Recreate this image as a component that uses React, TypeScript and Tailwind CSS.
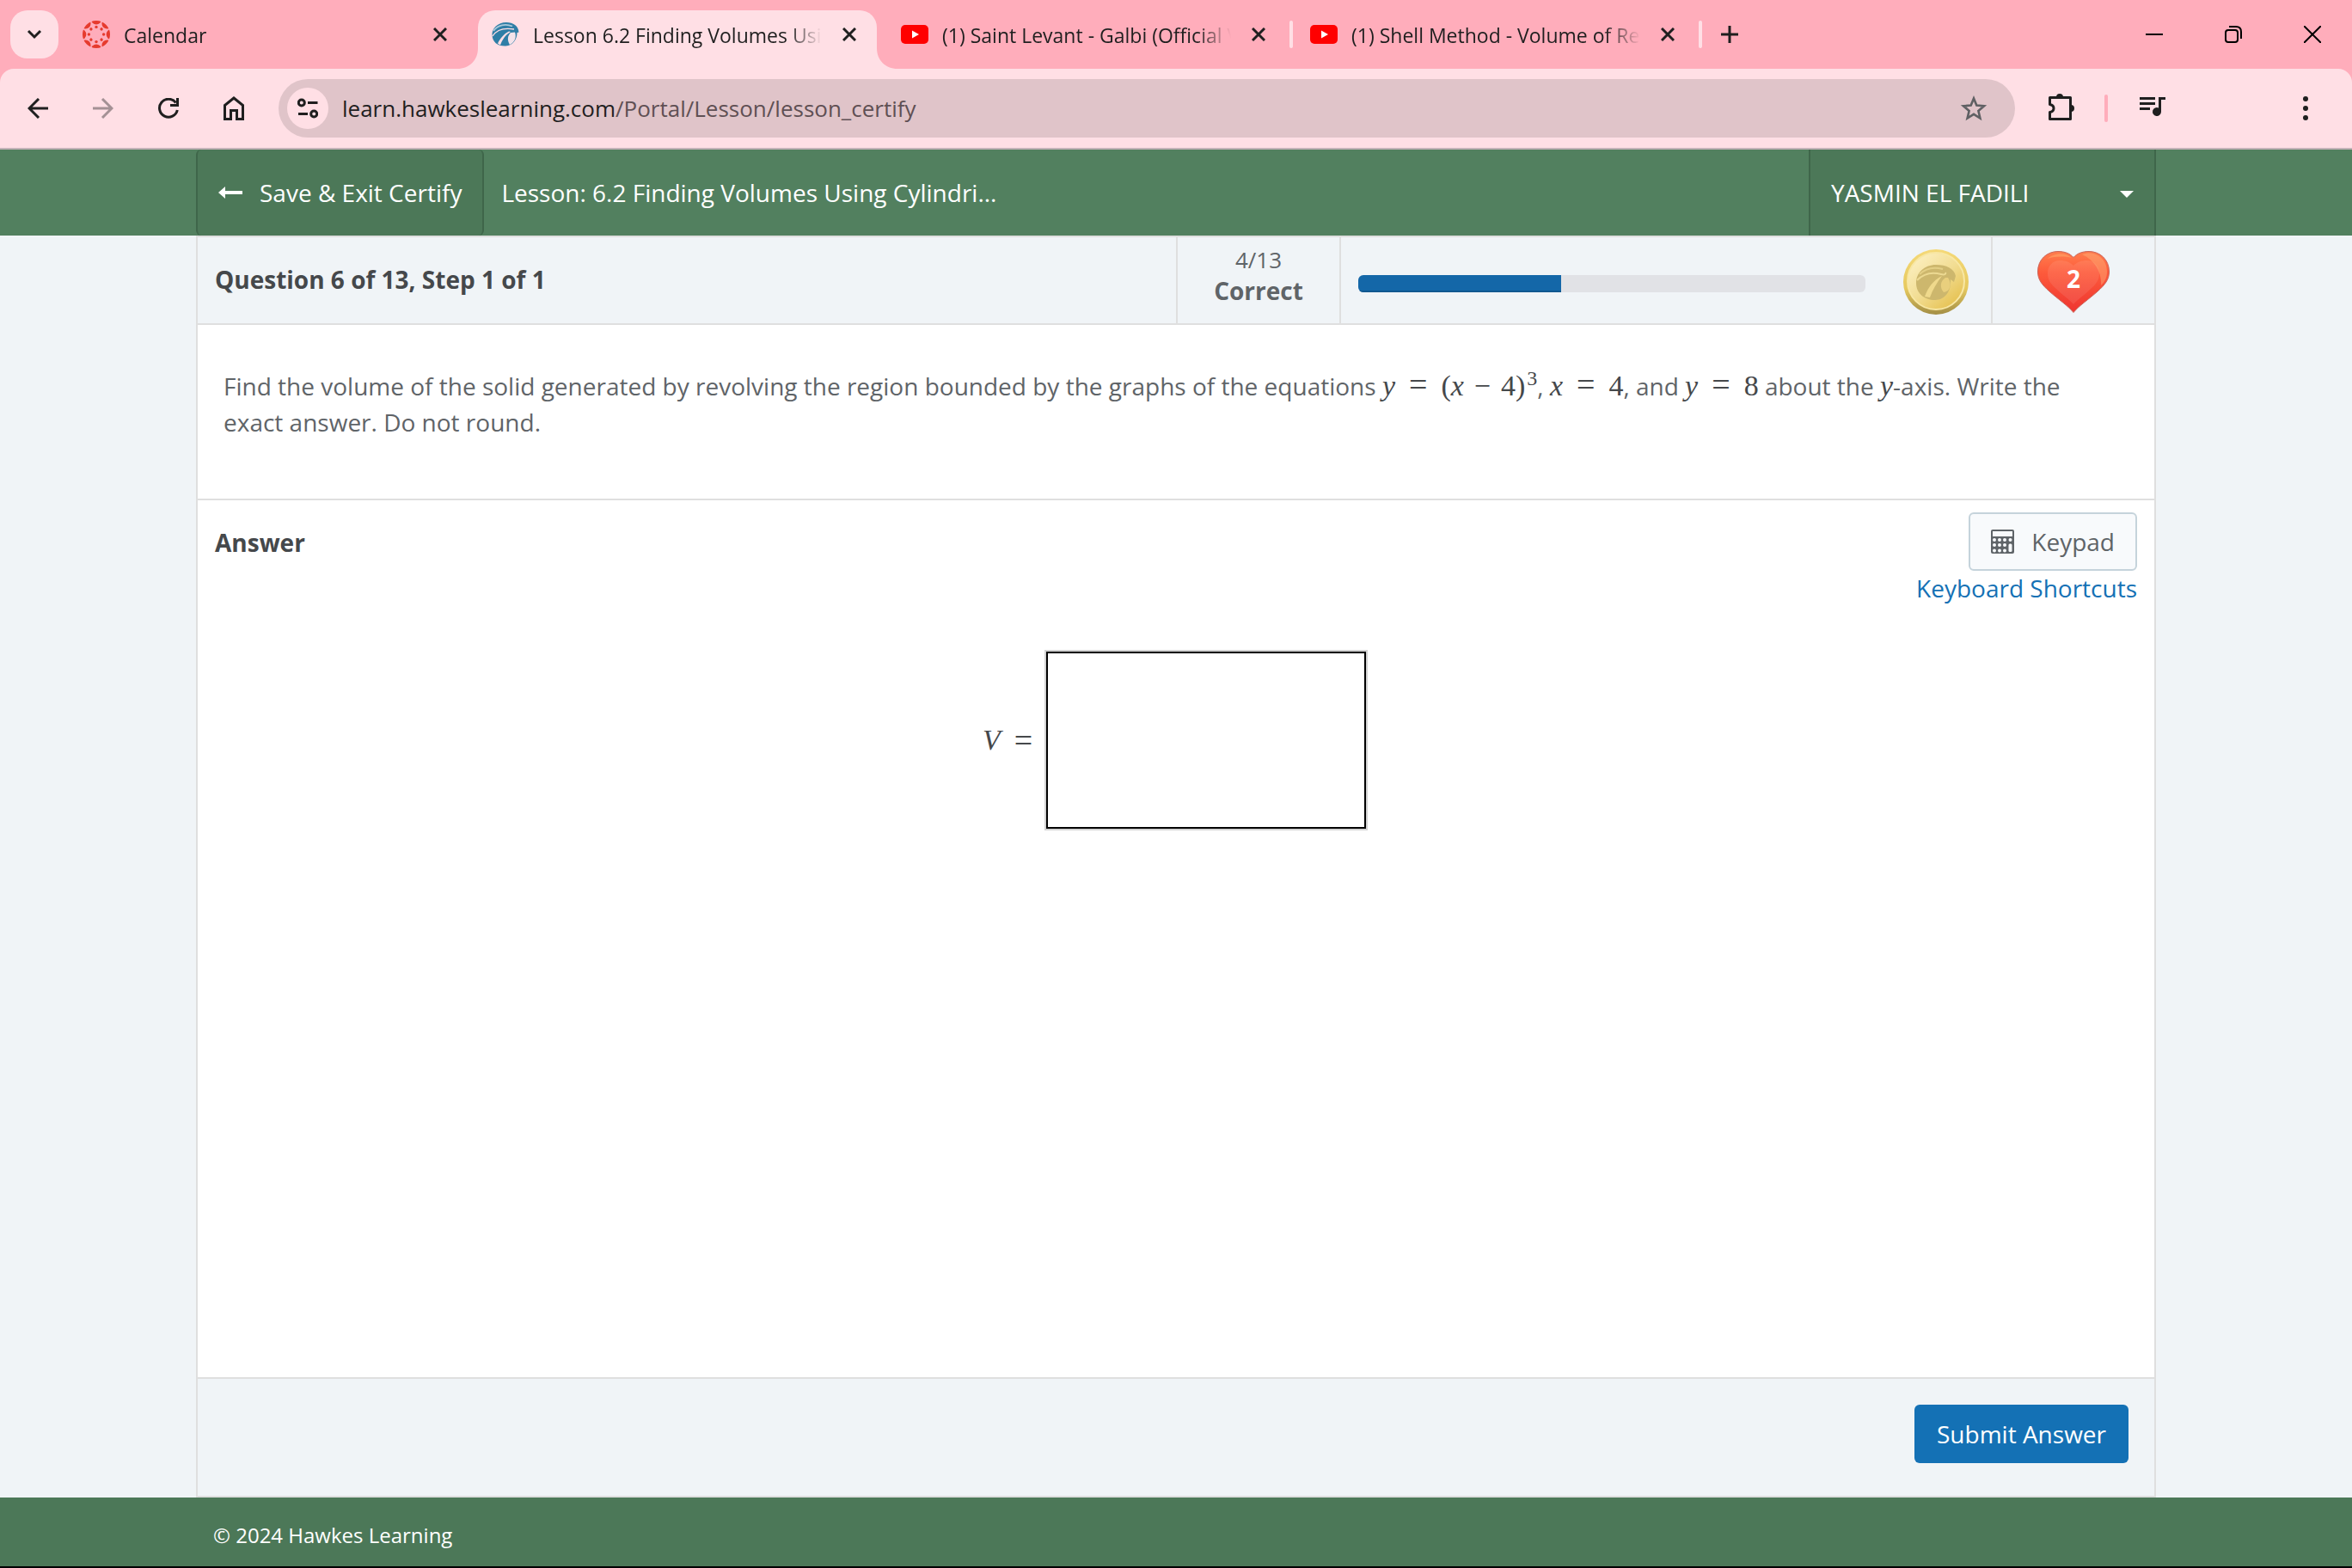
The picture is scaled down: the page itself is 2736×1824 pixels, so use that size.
import React, { useState } from 'react'
import clsx from 'clsx'

interface TabInfo {
  title: string
  icon: React.ReactNode
  active?: boolean
}

const SPOKES = [0, 45, 90, 135, 180, 225, 270, 315]

function CanvasLogo() {
  return (
    <svg viewBox="0 0 32 32" className="h-8 w-8 shrink-0" fill="#e63b2e">
      <clipPath id="canvas-disc">
        <circle cx="16" cy="16" r="16" />
      </clipPath>
      {SPOKES.map((angle) => (
        <g key={angle} transform={`rotate(${angle} 16 16)`}>
          <circle cx="16" cy="-1.600" r="6" clipPath="url(#canvas-disc)" />
          <circle cx="16" cy="7.400" r="1.700" />
        </g>
      ))}
    </svg>
  )
}

function HawkLogo() {
  return (
    <svg viewBox="0 0 32 32" className="h-8 w-8 shrink-0">
      <path
        d="M.5 17C0 9 7 2 17 2c8 0 14 4 14.500 11.500l-2 .5c0 8-5 15-13 15.500C7 30 1 25 .5 17z"
        fill="#2f7ea6"
      />
      <path d="M2 12C7 5 16 3 24 6.500" stroke="#a9c9da" strokeWidth="1.800" fill="none" />
      <path d="M1 18C6 10 14 8 26 10" stroke="#ffdfe5" strokeWidth="1.300" fill="none" />
      <path d="M20 12.500c-6 3-10 8-13 14l3 2c2-6 6-12 12-15.500z" fill="#ffdfe5" />
      <path d="M22 14c-4 4-4 9-1 14 6-3 8-9 6-14.500z" fill="#f3e3ea" />
    </svg>
  )
}

function YouTubeLogo() {
  return (
    <svg viewBox="0 0 32 32" className="h-8 w-8 shrink-0">
      <rect x="0" y="5" width="32" height="22" rx="5" fill="#ff0000" />
      <path d="M13 11.500v9l8-4.500z" fill="#fff" />
    </svg>
  )
}

function Coin() {
  return (
    <svg viewBox="0 0 76 76" className="h-19 w-19 shrink-0">
      <defs>
        <linearGradient id="coin-rim" x1="0" y1="0" x2="0" y2="1">
          <stop offset="0" stopColor="#f5d978" />
          <stop offset="0.6" stopColor="#e6c95f" />
          <stop offset="1" stopColor="#a38e45" />
        </linearGradient>
        <linearGradient id="coin-face" x1="0.15" y1="0.1" x2="0.85" y2="0.9">
          <stop offset="0" stopColor="#fbeebd" />
          <stop offset="0.5" stopColor="#f2dd93" />
          <stop offset="1" stopColor="#e6c252" />
        </linearGradient>
      </defs>
      <circle cx="38" cy="38" r="38" fill="url(#coin-rim)" />
      <circle cx="38" cy="37" r="33" fill="url(#coin-face)" stroke="#f8e7a4" strokeWidth="2" />
      <path
        d="M15 39c0-12 10-21 23-21 12 0 21 4 23 13l-2 7-4-3c1 13-6 24-18 24-13 0-22-8-22-20z"
        fill="#cdb76d"
      />
      <path d="M19 29c7-7 16-9 27-6" stroke="#e3cf86" strokeWidth="2" fill="none" />
      <path d="M16 36c8-8 17-10 28-7 4 1 6 0 5-2" stroke="#ecd992" strokeWidth="2" fill="none" />
      <path d="M45 31c-10 5-16 13-20 24l6 1c3-9 8-17 14-25z" fill="#efd98c" />
      <path d="M49 33c-6 4-7 11-2 17 8-1 10-10 5-17z" fill="#e9cf7d" />
    </svg>
  )
}

function Heart() {
  return (
    <svg viewBox="0 0 84 72" className="h-18 w-21">
      <defs>
        <linearGradient id="heart-fill" x1="0" y1="0" x2="0" y2="1">
          <stop offset="0" stopColor="#ff7d4d" />
          <stop offset="0.35" stopColor="#fd5a3b" />
          <stop offset="1" stopColor="#ee3430" />
        </linearGradient>
      </defs>
      <path
        d="M42 71.500C36 64 24 56 14 47 5 39 .5 33 .5 24 .5 10 11 .5 24 .5c8 0 14 2.500 18 7 4-4.500 10-7 18-7C73 .5 83.500 10 83.500 24c0 9-4.500 15-13.500 23-10 9-22 17-28 24.500z"
        fill="url(#heart-fill)"
        stroke="#c9655a"
        strokeWidth="1"
      />
      <path
        d="M42 62C37 56 29 51 22 44c-7-6-10-11-10-18 0-9 6-15 14-15 7 0 12 2 16 6 4-4 9-6 16-6 8 0 14 6 14 15 0 7-3 12-10 18-7 7-15 12-20 18z"
        fill="#fff"
        opacity="0.09"
      />
      <path d="M52 4c12-5 29 2 29 20 0 8-3 12-7 16 1-14-6-29-22-36z" fill="#ffb27a" opacity="0.45" />
      <path d="M12 9C17 3 32 0 40 8c-8-2-20-2-28 1z" fill="#ffa568" opacity="0.6" />
    </svg>
  )
}

function CalculatorIcon() {
  return (
    <svg viewBox="0 0 27 28" className="h-7 w-[27px]">
      <rect width="27" height="28" rx="2" fill="#5f6468" />
      <rect x="2" y="2" width="23" height="6" fill="#f8fafc" />
      {[12, 18, 24.5].map((cy) =>
        [4, 10, 16, 22.5].map((cx) =>
          cx > 20 && cy > 13 ? null : <circle key={`${cx}-${cy}`} cx={cx} cy={cy} r="2" fill="#f8fafc" />
        )
      )}
      <rect x="20.500" y="16.500" width="4" height="9.500" rx="1.500" fill="#f8fafc" />
    </svg>
  )
}

function CloseIcon() {
  return (
    <svg viewBox="0 0 16 16" className="h-4 w-4" stroke="#1f1f1f" strokeWidth="3">
      <path d="M1 1l14 14M15 1L1 15" />
    </svg>
  )
}

function Tab({ tab }: { tab: TabInfo }) {
  return (
    <div
      className={clsx(
        'relative flex h-17 w-116 shrink-0 items-center pl-4 pr-4',
        tab.active && 'rounded-t-[20px] bg-[#ffdfe5]'
      )}
    >
      {tab.active && (
        <>
          <svg viewBox="0 0 24 24" className="absolute bottom-0 -left-6 h-6 w-6" fill="#ffdfe5">
            <path d="M24 0v24H0C14 24 24 14 24 0z" />
          </svg>
          <svg viewBox="0 0 24 24" className="absolute bottom-0 -right-6 h-6 w-6" fill="#ffdfe5">
            <path d="M0 0v24h24C10 24 0 14 0 0z" />
          </svg>
        </>
      )}
      <span className="-mt-3 flex w-full items-center">
        {tab.icon}
        <span className="ml-4 w-[336px] overflow-hidden whitespace-nowrap pt-[2px] text-[23px] leading-8 text-[#1f1f1f] [mask-image:linear-gradient(to_right,black_88%,transparent)]">
          {tab.title}
        </span>
        <button aria-label="Close tab" className="ml-6 flex h-8 w-4 items-center justify-center">
          <CloseIcon />
        </button>
      </span>
    </div>
  )
}

const tabs: TabInfo[] = [
  { title: 'Calendar', icon: <CanvasLogo /> },
  { title: 'Lesson 6.2 Finding Volumes Using', icon: <HawkLogo />, active: true },
  { title: '(1) Saint Levant - Galbi (Official Video)', icon: <YouTubeLogo /> },
  { title: '(1) Shell Method - Volume of Revolution', icon: <YouTubeLogo /> },
]

function TabStrip() {
  return (
    <div className="flex h-20 items-end bg-[#ffadbb]">
      <button
        aria-label="Search tabs"
        className="mb-3 ml-3 mr-3 flex h-14 w-14 shrink-0 items-center justify-center rounded-[20px] bg-[#ffdfe5]"
      >
        <svg viewBox="0 0 18 12" className="h-3 w-[18px]" fill="none" stroke="#1f1f1f" strokeWidth="3">
          <path d="M2 2l7 7 7-7" />
        </svg>
      </button>
      {tabs.map((tab, i) => (
        <React.Fragment key={tab.title}>
          <Tab tab={tab} />
          <span className="mb-6 flex h-8 w-3 shrink-0 justify-center">
            {i > 1 && <span className="w-1 rounded-full bg-[#ffdfe5]" />}
          </span>
        </React.Fragment>
      ))}
      <button aria-label="New tab" className="mb-3 flex h-14 w-14 items-center justify-center">
        <svg viewBox="0 0 20 20" className="h-5 w-5" stroke="#1f1f1f" strokeWidth="3">
          <path d="M10 0v20M0 10h20" />
        </svg>
      </button>
      <div className="ml-auto flex h-20 items-center">
        <button aria-label="Minimize" className="flex h-20 w-[92px] items-center justify-center">
          <svg viewBox="0 0 20 20" className="h-5 w-5" stroke="#000" strokeWidth="2">
            <path d="M0 10h20" />
          </svg>
        </button>
        <button aria-label="Restore" className="flex h-20 w-[92px] items-center justify-center">
          <svg viewBox="0 0 20 20" className="h-5 w-5" fill="none" stroke="#000" strokeWidth="2">
            <rect x="1" y="5" width="14" height="14" rx="3" />
            <path d="M5 1h8c4 0 6 2 6 6v8" />
          </svg>
        </button>
        <button aria-label="Close window" className="flex h-20 w-[92px] items-center justify-center">
          <svg viewBox="0 0 20 20" className="h-5 w-5" stroke="#000" strokeWidth="2">
            <path d="M0 0l20 20M20 0L0 20" />
          </svg>
        </button>
      </div>
    </div>
  )
}

function ToolbarButton({ label, faded, children }: { label: string; faded?: boolean; children: React.ReactNode }) {
  return (
    <button
      aria-label={label}
      className={clsx('flex h-17 w-[76px] shrink-0 items-center justify-center text-[#1f1f1f]', faded && 'opacity-40')}
    >
      {children}
    </button>
  )
}

function Toolbar() {
  return (
    <div className="bg-[#ffadbb]">
      <div className="flex h-[94px] items-start rounded-t-2xl border-b-2 border-[#c4b3b8] bg-[#ffdfe5] pl-[6px] pt-3">
        <ToolbarButton label="Back">
          <svg viewBox="0 0 24 24" className="h-6 w-6" fill="none" stroke="currentColor" strokeWidth="3">
            <path d="M24 12H2M13 1L2 12l11 11" />
          </svg>
        </ToolbarButton>
        <ToolbarButton label="Forward" faded>
          <svg viewBox="0 0 24 24" className="h-6 w-6" fill="none" stroke="currentColor" strokeWidth="3">
            <path d="M0 12h22M11 1l11 11-11 11" />
          </svg>
        </ToolbarButton>
        <ToolbarButton label="Reload">
          <svg viewBox="0 0 24 24" className="h-6 w-6" fill="none" stroke="currentColor" strokeWidth="3">
            <path d="M22.300 14A10.500 10.500 0 1 1 20.500 5.500" />
            <path d="M22.500 0v8.500H14" />
          </svg>
        </ToolbarButton>
        <ToolbarButton label="Home">
          <svg viewBox="0 0 24 28" className="h-7 w-6" fill="none" stroke="currentColor" strokeWidth="3">
            <path d="M1.500 26.500V10.500L12 2l10.500 8.500v16h-7V16.500h-7v10z" />
          </svg>
        </ToolbarButton>
        <div className="ml-[14px] flex h-17 min-w-0 flex-1 items-center rounded-full bg-[#e0c4c9] pl-[10px] pr-8">
          <button
            aria-label="View site information"
            className="flex h-12 w-12 shrink-0 items-center justify-center rounded-full bg-[#ffdfe5]"
          >
            <svg viewBox="0 0 24 24" className="h-6 w-6" fill="none" stroke="#1f1f1f" strokeWidth="3">
              <circle cx="4.800" cy="5.500" r="3.500" />
              <path d="M12 5.500h11.500M1 18.500h11" />
              <circle cx="19.200" cy="18.500" r="3.500" />
            </svg>
          </button>
          <span className="ml-4 flex-1 text-[26px] leading-9 text-[#1f1f1f]">
            learn.hawkeslearning.com<span className="text-[#5f5054]">/Portal/Lesson/lesson_certify</span>
          </span>
          <button aria-label="Bookmark this tab" className="flex h-8 w-8 items-center justify-center">
            <svg viewBox="0 0 32 30" className="h-[30px] w-8" fill="none" stroke="#5f6063" strokeWidth="2.600">
              <path d="M16 3.500l3.300 8.100 8.700.7-6.600 5.700 2 8.500-7.400-4.600-7.400 4.600 2-8.500L4 12.300l8.700-.7z" />
            </svg>
          </button>
        </div>
        <div className="flex h-17 shrink-0 items-center pr-[38px]">
          <button aria-label="Extensions" className="ml-9 flex h-9 w-9 items-center justify-center">
            <svg viewBox="0 0 32 32" className="-mt-1 h-8 w-8" fill="none" stroke="#1f1f1f" strokeWidth="3">
              <path d="M2.500 5.500h24v25h-24v-8c6-1 6-8 0-9z" strokeLinejoin="round" />
              <path d="M10 5a4 4 0 0 1 8 0zM27 14a4 4 0 0 1 0 8z" fill="#1f1f1f" stroke="none" />
            </svg>
          </button>
          <span className="ml-8 h-8 w-1 rounded-full bg-[#ffadbb]" />
          <button aria-label="Media controls" className="ml-9 flex h-8 w-8 items-center justify-center">
            <svg viewBox="0 0 30 30" className="h-[30px] w-[30px]" fill="#1f1f1f">
              <path d="M0 2h18v3H0zM0 8h18v3H0zM0 14h12v3H0zM22 2h8v3h-5v14a5 5 0 1 1-3-4.600z" />
            </svg>
          </button>
          <button aria-label="Customize and control" className="ml-[146px] flex h-8 w-8 items-center justify-center">
            <svg viewBox="0 0 8 28" className="h-7 w-2" fill="#1f1f1f">
              <circle cx="4" cy="3" r="3" />
              <circle cx="4" cy="14" r="3" />
              <circle cx="4" cy="25" r="3" />
            </svg>
          </button>
        </div>
      </div>
    </div>
  )
}

function LessonHeader() {
  return (
    <header className="bg-[#52805f] text-[28px] text-white">
      <div className="mx-auto flex h-25 max-w-[2280px] items-stretch">
        <a
          href="#exit"
          className="flex items-center gap-5 rounded-md border-x-2 border-[#3f664a] bg-[#4c7858] pl-6 pr-6"
        >
          <svg viewBox="0 0 28 14" className="h-[14px] w-7" fill="#fff">
            <path d="M0 7l8-7v5h20v4H8v5z" />
          </svg>
          <span>Save &amp; Exit Certify</span>
        </a>
        <h1 className="flex items-center pl-5">Lesson: 6.2 Finding Volumes Using Cylindri...</h1>
        <button className="ml-auto flex w-[404px] items-center justify-between border-x-2 border-[#3f664a] bg-[#4c7858] pl-6 pr-6">
          <span>YASMIN EL FADILI</span>
          <svg viewBox="0 0 16 8" className="mt-1 h-2 w-4" fill="#fff">
            <path d="M0 0h16L8 8z" />
          </svg>
        </button>
      </div>
    </header>
  )
}

function StatusBar({ correct, total, lives }: { correct: number; total: number; lives: number }) {
  return (
    <div className="flex h-[104px] items-stretch border-y-2 border-[#dfdfdf] bg-[#f0f4f7]">
      <h2 className="flex flex-1 items-center pb-[2px] pl-5 text-[28px] font-bold text-[#45484b]">
        Question 6 of 13, Step 1 of 1
      </h2>
      <div className="flex w-[192px] flex-col items-center border-x-2 border-[#dfdfdf] pt-2 text-[#5f6468]">
        <span className="text-[26px] leading-9">
          {correct}/{total}
        </span>
        <span className="text-[28px] font-bold leading-9">Correct</span>
      </div>
      <div className="flex w-[756px] items-center pl-5 pr-[26px] pt-1">
        <div className="mt-1 h-5 flex-1 overflow-hidden rounded-md bg-[#e1e2e6]">
          <div className="h-full w-2/5 border-b-2 border-[#11588f] bg-[#1467a8]" />
        </div>
        <span className="ml-11">
          <Coin />
        </span>
      </div>
      <div className="relative flex w-[190px] items-center justify-center border-l-2 border-[#dfdfdf] pt-1">
        <Heart />
        <span className="absolute pb-2 text-[28px] font-bold text-white">{lives}</span>
      </div>
    </div>
  )
}

function Var({ children }: { children: React.ReactNode }) {
  return <i className="font-['Liberation_Serif',serif] text-[34px] leading-none text-[#45484b]">{children}</i>
}

function Num({ children }: { children: React.ReactNode }) {
  return <span className="font-['Liberation_Serif',serif] text-[34px] leading-none text-[#45484b]">{children}</span>
}

function Op({ children }: { children: React.ReactNode }) {
  return <span className="mx-4 font-['Liberation_Serif',serif] text-[38px] leading-none text-[#45484b]">{children}</span>
}

function QuestionText() {
  return (
    <section className="h-[204px] border-b-2 border-[#dfdfdf] bg-white pl-[30px] pr-14 pt-[50px]">
      <p className="text-[28px] leading-[42px] text-[#5f6468]">
        Find the volume of the solid generated by revolving the region bounded by the graphs of the equations{' '}
        <span className="whitespace-nowrap">
          <Var>y</Var>
          <Op>=</Op>
          <Num>(</Num>
          <Var>x</Var>
          <span className="mx-3">
            <Num>−</Num>
          </span>
          <Num>4)</Num>
          <sup className="ml-[2px] font-['Liberation_Serif',serif] text-[24px] leading-none text-[#45484b]">3</sup>
        </span>
        ,{' '}
        <span className="whitespace-nowrap">
          <Var>x</Var>
          <Op>=</Op>
          <Num>4</Num>
        </span>
        , and{' '}
        <span className="whitespace-nowrap">
          <Var>y</Var>
          <Op>=</Op>
          <Num>8</Num>
        </span>{' '}
        about the <Var>y</Var>-axis. Write the exact answer. Do not round.
      </p>
    </section>
  )
}

function AnswerPanel() {
  const [answer, setAnswer] = useState('')

  return (
    <section className="flex flex-1 flex-col bg-white">
      <div className="flex items-start justify-between pl-5 pr-5 pt-[14px]">
        <h2 className="text-[28px] font-bold leading-[70px] text-[#45484b]">Answer</h2>
        <div className="flex flex-col items-end">
          <button className="flex h-17 items-center gap-5 rounded-md border-2 border-[#c5d3db] bg-[#f8fafc] pl-6 pr-6 text-[28px] text-[#5f6468]">
            <CalculatorIcon />
            <span>Keypad</span>
          </button>
          <a href="#shortcuts" className="text-[28px] leading-10 text-[#1471b5]">
            Keyboard Shortcuts
          </a>
        </div>
      </div>
      <div className="mt-[54px] flex items-center justify-center pr-1">
        <label htmlFor="answer" className="flex items-center text-[#45484b]">
          <Var>V</Var>
          <Op>=</Op>
        </label>
        <input
          id="answer"
          value={answer}
          onChange={(e) => setAnswer(e.target.value)}
          className="h-[206px] w-[372px] border-2 border-black px-4 text-[34px] outline-2 outline-[#d3d3d3]"
        />
      </div>
    </section>
  )
}

export default function App() {
  return (
    <div className="flex min-h-screen flex-col border-b-2 border-black bg-[#f0f4f7] font-['Open_Sans',sans-serif]">
      <TabStrip />
      <Toolbar />
      <LessonHeader />
      <main className="mx-auto flex w-full max-w-[2280px] flex-1 flex-col border-x-2 border-[#dfdfdf]">
        <StatusBar correct={4} total={13} lives={2} />
        <QuestionText />
        <AnswerPanel />
        <div className="flex h-35 items-start justify-end border-y-2 border-[#dfdfdf] bg-[#f0f4f7] pr-[30px] pt-[30px]">
          <button className="h-17 rounded-md bg-[#1471b5] px-[26px] text-[28px] text-white">Submit Answer</button>
        </div>
      </main>
      <footer className="bg-[#4c7858] text-white">
        <p className="mx-auto h-20 max-w-[2280px] pl-5 pt-[26px] text-[24px] leading-9">© 2024 Hawkes Learning</p>
      </footer>
    </div>
  )
}
